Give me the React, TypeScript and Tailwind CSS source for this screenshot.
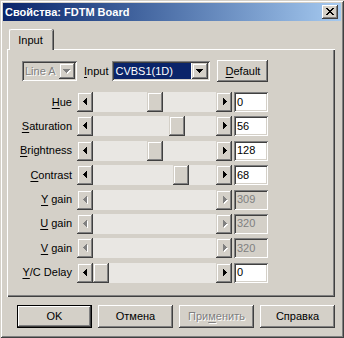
import React from "react";

const RAISED =
  "shadow-[inset_-1px_-1px_#404040,inset_1px_1px_#d4d0c8,inset_-2px_-2px_#808080,inset_2px_2px_#ffffff]";
const BUTTON =
  "shadow-[inset_-1px_-1px_#404040,inset_1px_1px_#ffffff,inset_-2px_-2px_#808080,inset_2px_2px_#d4d0c8]";
const SUNKEN =
  "shadow-[inset_1px_1px_#808080,inset_-1px_-1px_#ffffff,inset_2px_2px_#404040,inset_-2px_-2px_#d4d0c8]";
const CHECKER = "bg-[#e9e7e3]";

type Dir = "left" | "right" | "down";

function Glyph({ dir, color }: { dir: Dir; color: string }) {
  if (dir === "down") {
    return (
      <>
        <rect x={0} y={0} width={7} height={1} fill={color} />
        <rect x={1} y={1} width={5} height={1} fill={color} />
        <rect x={2} y={2} width={3} height={1} fill={color} />
        <rect x={3} y={3} width={1} height={1} fill={color} />
      </>
    );
  }
  const xs = dir === "left" ? [3, 2, 1, 0] : [0, 1, 2, 3];
  return (
    <>
      <rect x={xs[0]} y={0} width={1} height={7} fill={color} />
      <rect x={xs[1]} y={1} width={1} height={5} fill={color} />
      <rect x={xs[2]} y={2} width={1} height={3} fill={color} />
      <rect x={xs[3]} y={3} width={1} height={1} fill={color} />
    </>
  );
}

function Arrow({ dir, disabled }: { dir: Dir; disabled?: boolean }) {
  const w = dir === "down" ? 7 : 4;
  const h = dir === "down" ? 4 : 7;
  return (
    <svg width={w + 1} height={h + 1} viewBox={`0 0 ${w + 1} ${h + 1}`} shapeRendering="crispEdges">
      {disabled ? (
        <>
          <g transform="translate(1,1)">
            <Glyph dir={dir} color="#ffffff" />
          </g>
          <Glyph dir={dir} color="#808080" />
        </>
      ) : (
        <Glyph dir={dir} color="#000000" />
      )}
    </svg>
  );
}

function ScrollBtn({ dir, disabled }: { dir: Dir; disabled?: boolean }) {
  return (
    <div className={`flex h-full w-[16px] shrink-0 items-center justify-center bg-[#d4d0c8] ${RAISED}`}>
      <div className={dir === "left" ? "ml-[1px]" : "ml-[2px]"}>
        <Arrow dir={dir} disabled={disabled} />
      </div>
    </div>
  );
}

function Slider({ pos, disabled }: { pos?: number; disabled?: boolean }) {
  return (
    <div className="flex h-full w-[155px] shrink-0">
      <ScrollBtn dir="left" disabled={disabled} />
      <div className={`relative flex-1 ${CHECKER}`}>
        {pos !== undefined && (
          <div
            className={`absolute top-0 h-full w-[16px] bg-[#d4d0c8] ${RAISED}`}
            style={{ left: pos }}
          />
        )}
      </div>
      <ScrollBtn dir="right" disabled={disabled} />
    </div>
  );
}

function Mn({ text, idx = 0 }: { text: string; idx?: number }) {
  return (
    <>
      {text.slice(0, idx)}
      <span className="underline decoration-1 underline-offset-[2px]">{text[idx]}</span>
      {text.slice(idx + 1)}
    </>
  );
}

const rows = [
  { label: "Hue", value: "0", pos: 54 },
  { label: "Saturation", value: "56", pos: 76 },
  { label: "Brightness", value: "128", pos: 54 },
  { label: "Contrast", value: "68", pos: 80 },
  { label: "Y gain", value: "309", disabled: true },
  { label: "U gain", value: "320", disabled: true },
  { label: "V gain", value: "320", disabled: true },
  { label: "Y/C Delay", value: "0", pos: 0 },
];

function PushButton({
  children,
  isDefault,
  disabled,
}: {
  children: React.ReactNode;
  isDefault?: boolean;
  disabled?: boolean;
}) {
  const inner = (
    <div
      className={`flex h-full w-full items-center justify-center bg-[#d4d0c8] ${BUTTON} ${
        disabled ? "text-[#808080] [text-shadow:1px_1px_0_#ffffff]" : "text-black"
      }`}
    >
      {children}
    </div>
  );
  if (isDefault) {
    return <div className="h-[23px] w-[75px] border border-black">{inner}</div>;
  }
  return <div className="h-[23px] w-[75px]">{inner}</div>;
}

export default function App() {
  return (
    <div
      className={`flex h-[338px] w-[344px] flex-col bg-[#d4d0c8] p-[3px] font-['Liberation_Sans',Arial,sans-serif] text-[11px] leading-none text-black shadow-[inset_1px_1px_#d4d0c8,inset_-1px_-1px_#404040,inset_2px_2px_#ffffff,inset_-2px_-2px_#808080]`}
    >
      {/* Title bar */}
      <div className="flex h-[18px] shrink-0 items-center justify-between bg-gradient-to-r from-[#0a246a] to-[#a6caf0] pl-[2px] pr-[3px]">
        <span className="whitespace-nowrap text-[11px] font-bold text-white">Свойства: FDTM Board</span>
        <div className={`flex h-[14px] w-[16px] items-center justify-center bg-[#d4d0c8] ${BUTTON}`}>
          <svg width="8" height="7" viewBox="0 0 8 7" shapeRendering="crispEdges" className="mb-[1px]">
            <rect x={0} y={0} width={2} height={1} fill="#000" />
            <rect x={6} y={0} width={2} height={1} fill="#000" />
            <rect x={1} y={1} width={2} height={1} fill="#000" />
            <rect x={5} y={1} width={2} height={1} fill="#000" />
            <rect x={2} y={2} width={4} height={1} fill="#000" />
            <rect x={3} y={3} width={2} height={1} fill="#000" />
            <rect x={2} y={4} width={4} height={1} fill="#000" />
            <rect x={1} y={5} width={2} height={1} fill="#000" />
            <rect x={5} y={5} width={2} height={1} fill="#000" />
            <rect x={0} y={6} width={2} height={1} fill="#000" />
            <rect x={6} y={6} width={2} height={1} fill="#000" />
          </svg>
        </div>
      </div>

      {/* Tab strip */}
      <div className="mt-[8px] flex pl-[6px]">
        <div className="relative z-10 -mb-[1px] flex h-[21px] w-[44px] items-start justify-center rounded-t-[2px] border-l border-t border-white bg-[#d4d0c8] pt-[5px] shadow-[inset_-1px_0_#808080,1px_0_#404040]">
          <span className="pr-[2px]">Input</span>
        </div>
      </div>

      {/* Panel */}
      <div className="ml-[4px] flex h-[248px] w-[328px] flex-col shadow-[inset_1px_1px_#ffffff,inset_-1px_-1px_#404040,inset_-2px_-2px_#808080]">
        {/* Input row */}
        <div className="mt-[11px] flex h-[22px] items-center">
          <div className={`ml-[15px] flex h-[20px] w-[55px] items-center bg-[#d4d0c8] p-[2px] ${SUNKEN}`}>
            <span className="flex-1 overflow-hidden whitespace-nowrap pl-[1px] text-[#808080] [text-shadow:1px_1px_0_#ffffff]">
              Line A
            </span>
            <div className={`flex h-full w-[16px] shrink-0 items-center justify-center bg-[#d4d0c8] ${RAISED}`}>
              <Arrow dir="down" disabled />
            </div>
          </div>
          <span className="ml-[7px]">
            <Mn text="Input" />
          </span>
          <div className={`ml-[4px] flex h-[20px] w-[98px] items-center bg-white p-[2px] ${SUNKEN}`}>
            <div className="flex h-full flex-1 items-center pr-[1px]">
              <span className="flex h-full flex-1 items-center whitespace-nowrap bg-[#0a246a] pl-[1px] text-white">
                CVBS1(1D)
              </span>
            </div>
            <div className={`flex h-full w-[16px] shrink-0 items-center justify-center bg-[#d4d0c8] ${RAISED}`}>
              <Arrow dir="down" />
            </div>
          </div>
          <div className={`ml-[7px] flex h-[22px] w-[51px] items-center justify-center bg-[#d4d0c8] ${BUTTON}`}>
            <Mn text="Default" />
          </div>
        </div>

        {/* Slider rows */}
        <div className="mt-[10px] flex flex-col gap-[4.4px]">
          {rows.map((r) => (
            <div key={r.label} className="flex h-[20px] items-center">
              <div className="w-[65px] shrink-0 whitespace-nowrap text-right">
                <Mn text={r.label} />
              </div>
              <div className="ml-[5px] h-full">
                <Slider pos={r.pos} disabled={r.disabled} />
              </div>
              <div
                className={`ml-[2px] flex h-full w-[34px] items-center pl-[3px] ${SUNKEN} ${
                  r.disabled ? "bg-[#d4d0c8] text-[#808080]" : "bg-white text-black"
                }`}
              >
                {r.value}
              </div>
            </div>
          ))}
        </div>
      </div>

      {/* Buttons */}
      <div className="mt-[8px] flex gap-[6px] pl-[14px]">
        <PushButton isDefault>OK</PushButton>
        <PushButton>Отмена</PushButton>
        <PushButton disabled>
          <Mn text="Применить" idx={3} />
        </PushButton>
        <PushButton>Справка</PushButton>
      </div>
    </div>
  );
}
